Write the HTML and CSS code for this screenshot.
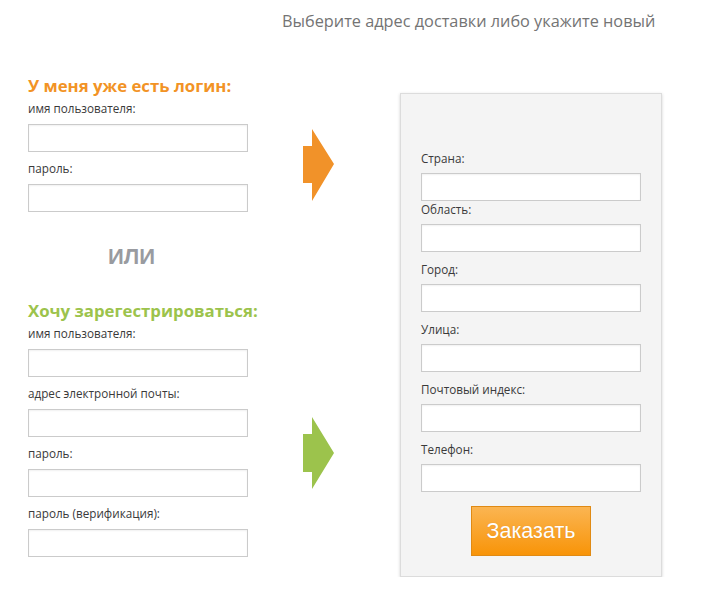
FILE: index.html
```html
<!DOCTYPE html>
<html lang="ru">
<head>
<meta charset="utf-8">
<title>Оформление заказа</title>
<link rel="stylesheet" href="styles.css">
</head>
<body>
<div class="page">
  <div class="header">Выберите адрес доставки либо укажите новый</div>
  <div class="content">
    <div class="left">
      <h2 class="title title-orange">У меня уже есть логин:</h2>
      <label class="lbl">имя пользователя:</label>
      <input class="field" type="text">
      <label class="lbl lbl-next">пароль:</label>
      <input class="field" type="password">

      <div class="or">ИЛИ</div>

      <h2 class="title title-green">Хочу зарегестрироваться:</h2>
      <label class="lbl">имя пользователя:</label>
      <input class="field" type="text">
      <label class="lbl lbl-next">адрес электронной почты:</label>
      <input class="field" type="text">
      <label class="lbl lbl-next">пароль:</label>
      <input class="field" type="password">
      <label class="lbl lbl-next">пароль (верификация):</label>
      <input class="field" type="password">
    </div>

    <div class="arrows">
      <svg class="arrow arrow-orange" width="31" height="72" viewBox="0 0 31 72"><polygon points="0,17 9,17 9,0 31,35 9,72 9,54 0,54"/></svg>
      <svg class="arrow arrow-green" width="31" height="72" viewBox="0 0 31 72"><polygon points="0,17 9,17 9,0 31,36 9,72 9,55 0,55"/></svg>
    </div>

    <div class="panel">
      <label class="plbl plbl-first">Страна:</label>
      <input class="field" type="text">
      <label class="plbl">Область:</label>
      <input class="field" type="text">
      <label class="plbl plbl-next">Город:</label>
      <input class="field" type="text">
      <label class="plbl plbl-next">Улица:</label>
      <input class="field" type="text">
      <label class="plbl plbl-next">Почтовый индекс:</label>
      <input class="field" type="text">
      <label class="plbl plbl-next">Телефон:</label>
      <input class="field" type="text">
      <div class="btn-row"><button class="btn" type="button">Заказать</button></div>
    </div>
  </div>
</div>
</body>
</html>
```
FILE: styles.css
```css
* { box-sizing: border-box; }
html, body { margin: 0; padding: 0; background: #fff; }
body { font-family: "Open Sans", "Noto Sans", sans-serif; color: #3a3a3a; }

.page { padding-left: 28px; }

.header {
  padding-top: 10px;
  padding-left: 254px;
  font-size: 16.3px;
  line-height: 22px;
  height: 32px;
  color: #747474;
  white-space: nowrap;
}

.content { display: flex; align-items: flex-start; }

.left { width: 220px; margin-top: 43px; display: flex; flex-direction: column; }

.title {
  margin: 0 0 3px;
  font-size: 16.8px;
  line-height: 22px;
  font-weight: 700;
  white-space: nowrap;
}
.title-orange { color: #f29325; }
.title-green { color: #9cc34c; }

.lbl {
  display: block;
  font-size: 11.7px;
  line-height: 16px;
  margin-bottom: 8px;
  white-space: nowrap;
}
.lbl-next { margin-top: 8px; }

.field {
  display: block;
  width: 220px;
  height: 28px;
  margin: 0;
  border: 1px solid #cbcbcb;
  background: #fff;
  box-shadow: inset 0 1px 2px rgba(0,0,0,0.06);
  font: inherit;
  padding: 0 6px;
}

.or {
  margin-top: 32px;
  margin-bottom: 30px;
  padding-left: 80px;
  font-family: "Liberation Sans", Arial, sans-serif;
  font-weight: 700;
  font-size: 22px;
  line-height: 26px;
  color: #999ba0;
}

.arrows {
  width: 31px;
  margin-left: 55px;
  margin-top: 97px;
  display: flex;
  flex-direction: column;
  gap: 216px;
}
.arrow { display: block; }
.arrow-orange { fill: #f19229; }
.arrow-green { fill: #9cc34c; }

.panel {
  width: 262px;
  margin-left: 66px;
  margin-top: 61px;
  padding: 56px 20px 20px;
  background: #f4f4f4;
  border: 1px solid #dcdcdc;
  box-shadow: 0 1px 3px rgba(0,0,0,0.18);
  display: flex;
  flex-direction: column;
}

.plbl {
  display: block;
  font-size: 11.7px;
  line-height: 16px;
  margin-bottom: 7px;
  white-space: nowrap;
}
.plbl-next { margin-top: 9px; }

.btn-row { display: flex; justify-content: center; margin-top: 14px; }
.btn {
  width: 120px;
  height: 50px;
  border: 1px solid #e08a14;
  background: linear-gradient(#fbb552, #f89408);
  color: #fff;
  font-family: "Liberation Sans", Arial, sans-serif;
  font-size: 21.5px;
  padding: 0;
  text-shadow: 0 0 1px rgba(160,80,0,0.35);
}
```
